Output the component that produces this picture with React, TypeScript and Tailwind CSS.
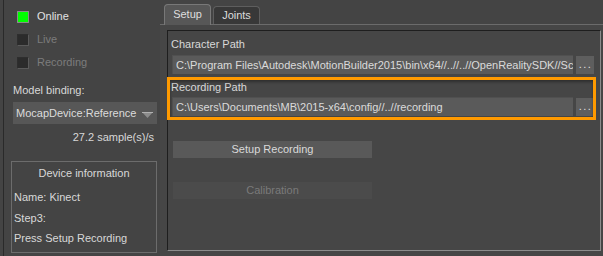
import React from "react";

function Check({ on, label, dim }: { on?: boolean; label: string; dim?: boolean }) {
  return (
    <div className="h-[23px] flex items-center pl-[13px]">
      <div
        className={
          on
            ? "w-[12px] h-[12px] bg-[#00ff00] border border-[#8a8a8a]"
            : "w-[12px] h-[12px] bg-[#2b2b2b] border border-t-[#2e2e2e] border-l-[#2e2e2e] border-r-[#5a5a5a] border-b-[#5a5a5a]"
        }
      />
      <span className={"ml-[8px] " + (dim ? "text-[#7c7c7c]" : "text-[#e2e2e2]")}>{label}</span>
    </div>
  );
}

function PathRow({ value }: { value: string }) {
  return (
    <div className="flex items-center h-[19px]">
      <div className="w-[401px] h-[19px] bg-[#5a5a5a] border-t border-l border-[#505050] flex items-center pl-[3px] overflow-hidden whitespace-nowrap text-[#dadada]">
        <span className="block overflow-hidden w-full">{value}</span>
      </div>
      <div className="ml-[3px] w-[18px] h-[18px] bg-[#5e5e5e] flex items-center justify-center text-[#e0e0e0] leading-none pb-[1px] tracking-[1.5px] pl-[1px]">
        ...
      </div>
    </div>
  );
}

export default function App() {
  return (
    <div className="w-[603px] h-[256px] bg-[#444444] flex font-['Liberation_Sans',Arial,sans-serif] text-[11px] text-[#d6d6d6] overflow-hidden">
      {/* Left panel */}
      <div className="w-[160px] h-full flex shrink-0">
        <div className="w-[1px] h-full bg-[#2a2a2a] ml-[3px]" />
        <div className="flex-1 flex flex-col pt-[5px]">
          <Check on label="Online" />
          <Check label="Live" dim />
          <Check label="Recording" dim />
          <div className="mt-[9px] h-[14px] flex items-center pl-[9px] text-[#d8d8d8]">Model binding:</div>
          <div className="mt-[5px] ml-[9px] w-[144px] h-[22px] bg-[#575757] flex items-center pl-[3px] text-[#dcdcdc]">
            <span className="flex-1">MocapDevice:Reference</span>
            <svg width="11" height="6" viewBox="0 0 11 6" className="mr-[4px] mt-[3px]">
              <polygon points="0,0 11,0 5.5,6" fill="#8c8c8c" />
              <polyline points="0,0.5 11,0.5" stroke="#b0b0b0" strokeWidth="1" />
            </svg>
          </div>
          <div className="mt-[6px] h-[14px] flex items-center justify-end pr-[6px] text-[#d8d8d8]">27.2 sample(s)/s</div>
          <div className="mt-[17px] ml-[7px] w-[146px] h-[92px] border border-[#6c6c6c] flex flex-col pl-[2px] text-[#d8d8d8]">
            <div className="mt-[4px] h-[14px] flex items-center justify-center pr-[2px]">Device information</div>
            <div className="mt-[10px] h-[14px] flex items-center">Name: Kinect</div>
            <div className="mt-[7px] h-[14px] flex items-center">Step3:</div>
            <div className="mt-[6px] h-[14px] flex items-center">Press Setup Recording</div>
          </div>
        </div>
      </div>

      {/* Right panel */}
      <div className="flex-1 flex flex-col">
        <div className="h-[25px] border-b border-[#6b6b6b] flex items-end pl-[4px] shrink-0">
          <div className="relative z-10 -mb-[1px] w-[47px] h-[21px] bg-[#575757] border-t border-l border-r border-[#787878] rounded-t-[4px] flex items-center justify-center pb-[2px] text-[#dedede]">
            Setup
          </div>
          <div className="ml-[2px] w-[47px] h-[18px] bg-[#383838] border-t border-l border-r border-[#5e5e5e] rounded-t-[4px] flex items-center justify-center text-[#dcdcdc]">
            Joints
          </div>
        </div>
        <div className="flex-1 bg-[#464646] pl-[7px] pt-[5px] pr-[2px] pb-[5px]">
          <div className="relative h-full border-t border-l border-[#1e1e1e] border-r-[#8c8c8c] border-b-[#8c8c8c] border-r border-b flex flex-col pl-[4px]">
            <div className="mt-[6px] h-[14px] flex items-center -ml-[1px] text-[#d8d8d8]">Character Path</div>
            <div className="mt-[4px]">
              <PathRow value={"C:\\Program Files\\Autodesk\\MotionBuilder2015\\bin\\x64//..//..//OpenRealitySDK//Sc"} />
            </div>
            <div className="mt-[6px] h-[14px] flex items-center -ml-[1px] text-[#d8d8d8]">Recording Path</div>
            <div className="mt-[3px]">
              <PathRow value={"C:\\Users\\Documents\\MB\\2015-x64\\config//..//recording"} />
            </div>
            <div className="mt-[25px] ml-[1px] w-[199px] h-[17px] bg-[#595959] flex items-center justify-center text-[#dadada]">
              Setup Recording
            </div>
            <div className="mt-[24px] ml-[1px] w-[199px] h-[17px] bg-[#4b4b4b] flex items-center justify-center text-[#7a7a7a]">
              Calibration
            </div>
            <div className="absolute left-[-1px] top-[46px] w-[429px] h-[43px] border-[3px] border-[#ff9a00] shadow-[inset_0_2px_3px_rgba(0,0,0,0.35)] pointer-events-none" />
          </div>
        </div>
      </div>
    </div>
  );
}
